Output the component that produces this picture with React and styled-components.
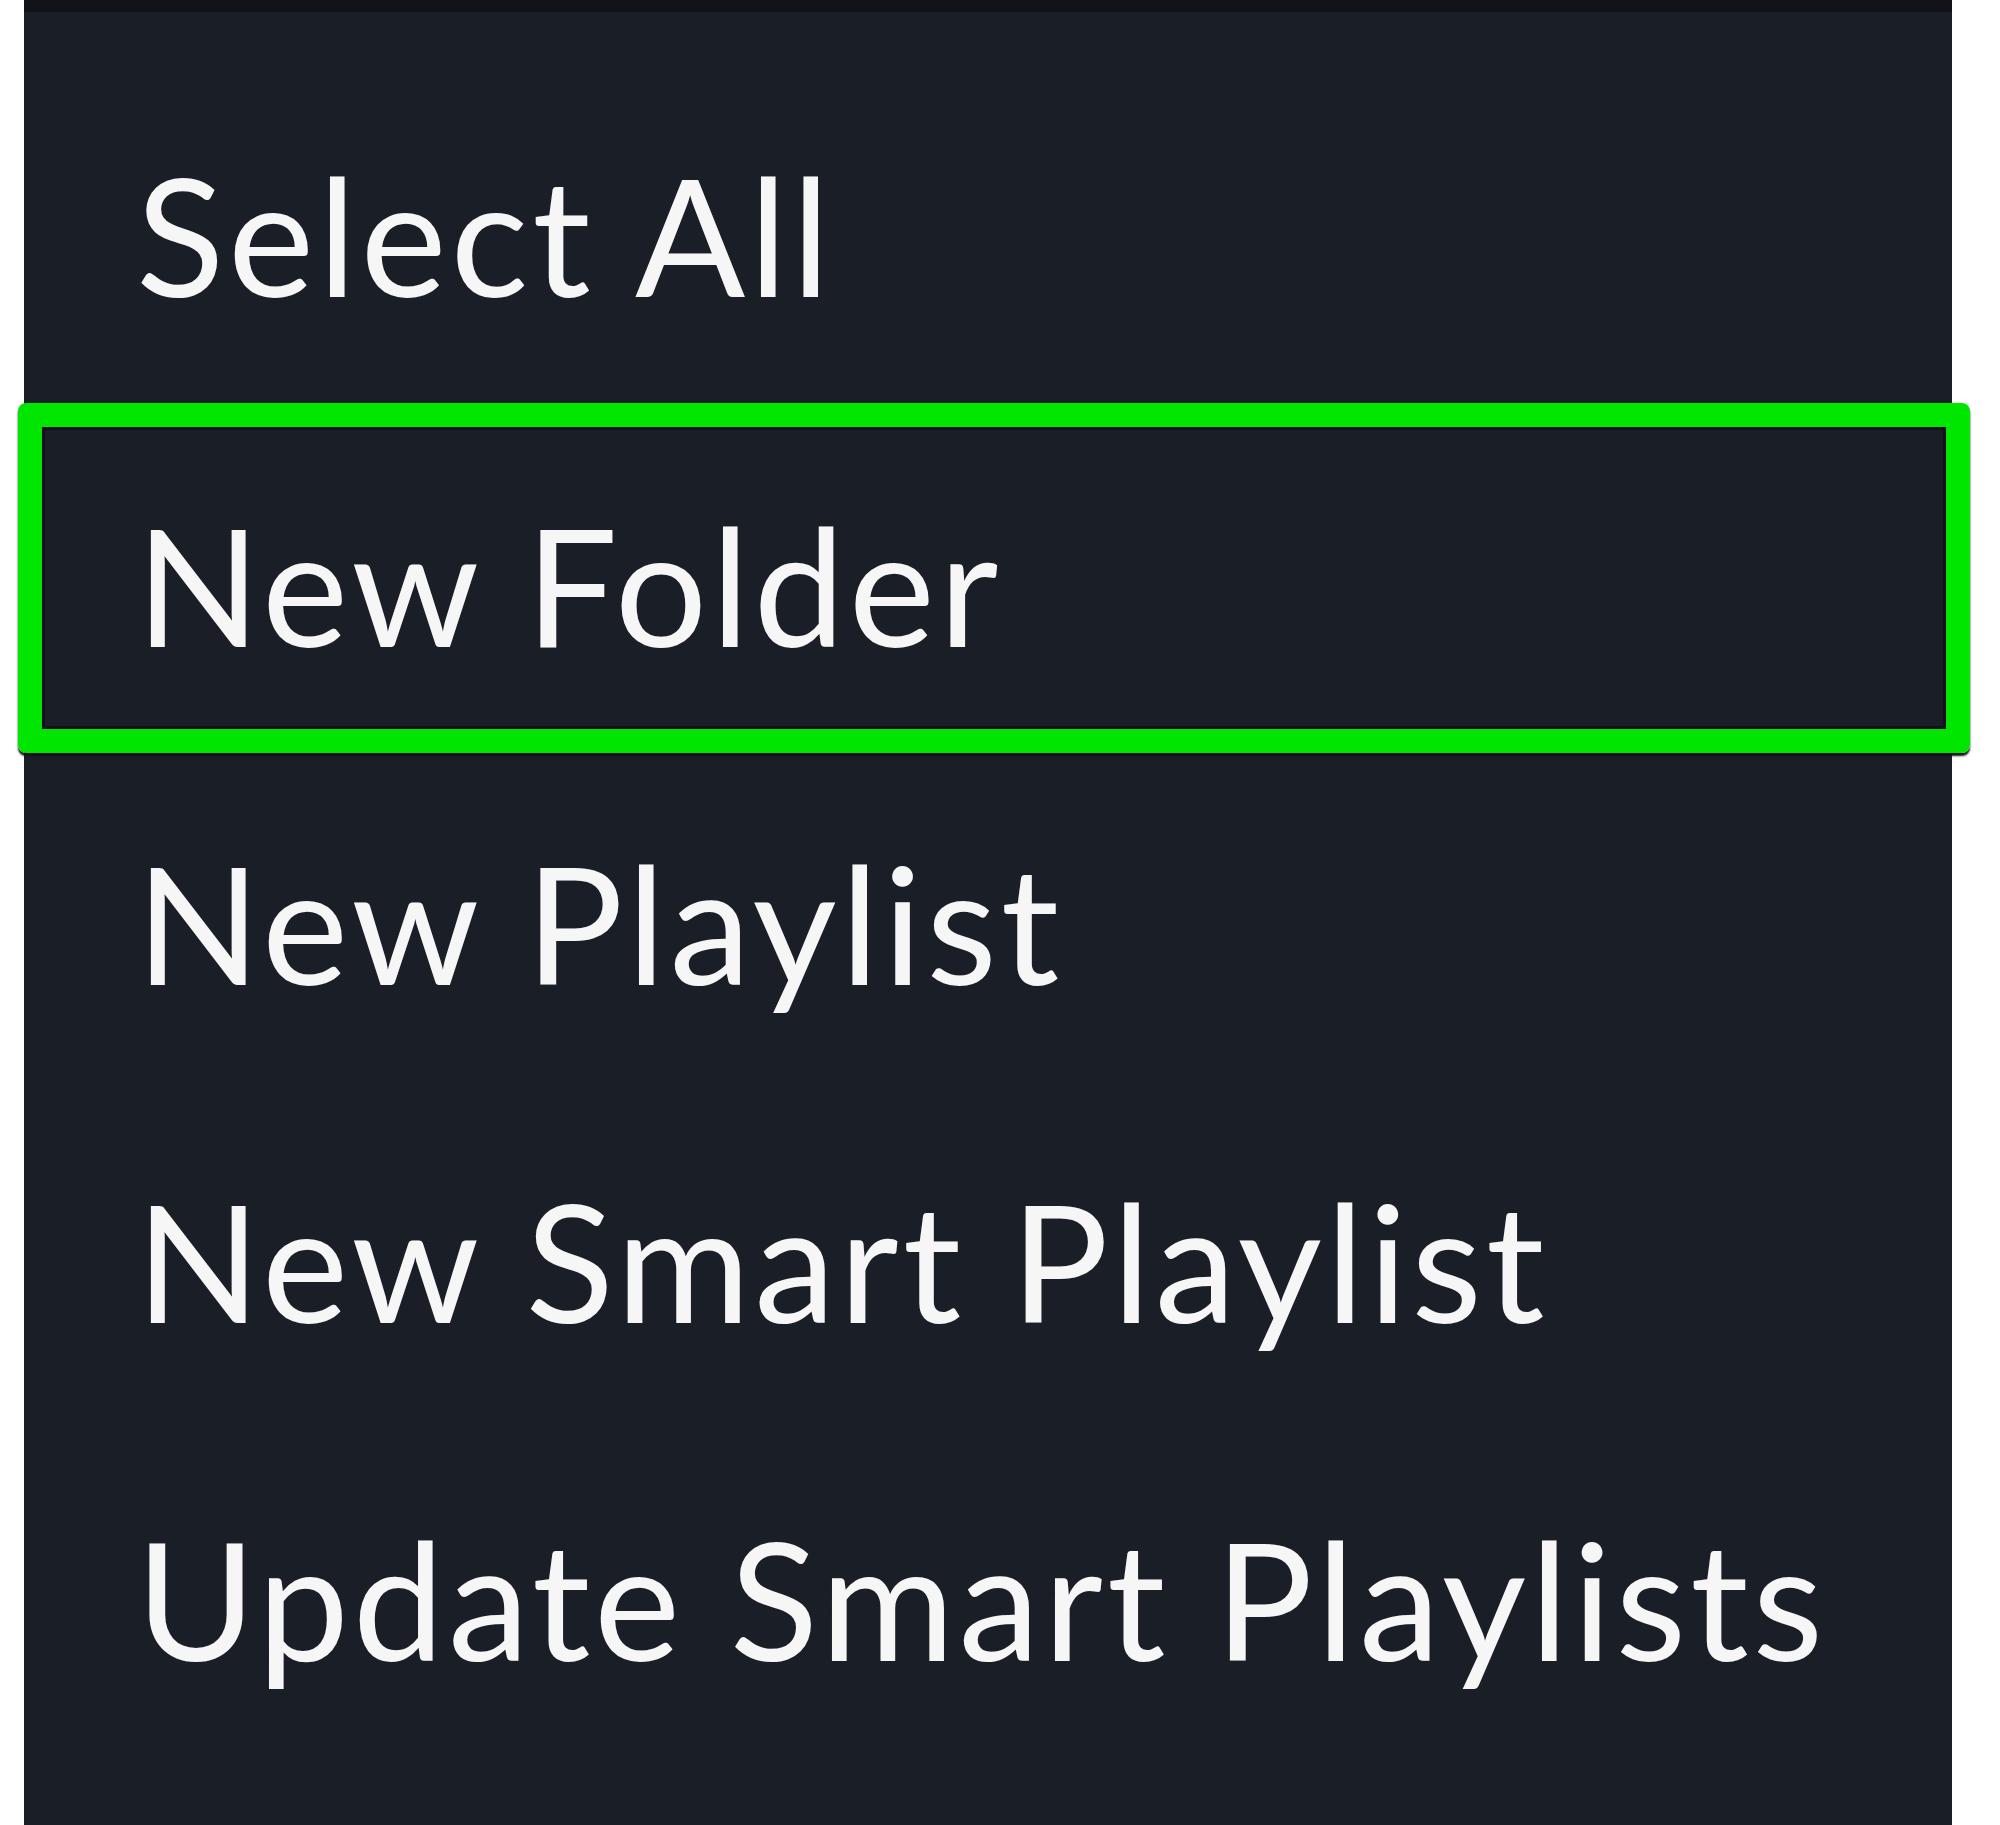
import React from "react";
import styled, { createGlobalStyle } from "styled-components";

const GlobalStyle = createGlobalStyle`
  html, body {
    margin: 0;
    padding: 0;
    background: #ffffff;
  }
  body {
    font-family: Lato, "Noto Sans", "Liberation Sans", sans-serif;
  }
`;

const items = [
  "Select All",
  "New Folder",
  "New Playlist",
  "New Smart Playlist",
  "Update Smart Playlists",
];

export default function App() {
  // index of the item that holds keyboard focus
  const focused = 1;

  return (
    <>
      <GlobalStyle />
      <Page>
        <Menu>
          {items.map((label, i) => (
            <MenuItem key={label} $lead={i === 0}>
              <Label>{label}</Label>
              {i === focused && <FocusRing />}
            </MenuItem>
          ))}
        </Menu>
      </Page>
    </>
  );
}

const Page = styled.div`
  width: 2000px;
  height: 1825px;
  overflow: hidden;
  padding-left: 24px;
  box-sizing: border-box;
`;

const Menu = styled.ul`
  list-style: none;
  margin: 0;
  width: 1928px;
  height: 1825px;
  box-sizing: border-box;
  padding: 63px 0 0 0;
  background: #1a1e27;
  border-top: 12px solid #111318;
  display: flex;
  flex-direction: column;
`;

const MenuItem = styled.li`
  position: relative;
  height: 338px;
  flex: 0 0 338px;
  box-sizing: border-box;
  display: flex;
  align-items: center;
  padding: 0 0 ${(p) => (p.$lead ? "24px" : "0")} 112px;
`;

const Label = styled.span`
  font-size: 163px;
  line-height: 1;
  font-weight: 400;
  letter-spacing: 4px;
  color: #f6f6f6;
  white-space: nowrap;
  transform: translateY(2px);
`;

const FocusRing = styled.span`
  position: absolute;
  top: -10px;
  bottom: -2px;
  left: -6px;
  right: -18px;
  border: 24px solid #00e600;
  border-radius: 8px;
  box-shadow: inset 0 0 0 3px #130f1b, 0 3px 2px #130f1b;
  pointer-events: none;
`;
